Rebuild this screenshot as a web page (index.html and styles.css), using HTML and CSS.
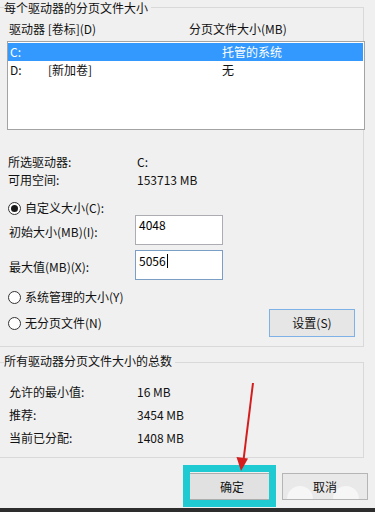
FILE: index.html
```html
<!DOCTYPE html>
<html lang="zh-CN">
<head>
<meta charset="utf-8">
<title>虚拟内存</title>
<link rel="stylesheet" href="styles.css">
</head>
<body>
<div class="screen">
  <section class="group group-pages">
    <div class="group-title">每个驱动器的分页文件大小</div>
    <div class="col-head"><span class="h-drive">驱动器 [卷标](D)</span><span class="h-size">分页文件大小(MB)</span></div>
    <div class="list">
      <div class="row selected"><span class="c1">C:</span><span class="c2"></span><span class="c3">托管的系统</span></div>
      <div class="row"><span class="c1">D:</span><span class="c2">[新加卷]</span><span class="c3">无</span></div>
    </div>
    <div class="info">
      <div class="kv"><span class="k">所选驱动器:</span><span class="v">C:</span></div>
      <div class="kv"><span class="k">可用空间:</span><span class="v">153713 MB</span></div>
    </div>
    <div class="radio r-custom"><span class="dot checked"></span><span>自定义大小(C):</span></div>
    <div class="field f-init"><span class="flabel">初始大小(MB)(I):</span><span class="input">4048</span></div>
    <div class="field f-max"><span class="flabel">最大值(MB)(X):</span><span class="input focus">5056<span class="caret"></span></span></div>
    <div class="radio r-sys"><span class="dot"></span><span>系统管理的大小(Y)</span></div>
    <div class="last-row">
      <div class="radio r-none"><span class="dot"></span><span>无分页文件(N)</span></div>
      <button class="btn btn-set">设置(S)</button>
    </div>
  </section>

  <section class="group group-total">
    <div class="group-title">所有驱动器分页文件大小的总数</div>
    <div class="totals">
      <div class="trow"><span class="k">允许的最小值:</span><span class="v">16 MB</span></div>
      <div class="trow"><span class="k">推荐:</span><span class="v">3454 MB</span></div>
      <div class="trow"><span class="k">当前已分配:</span><span class="v">1408 MB</span></div>
    </div>
  </section>

  <div class="actions">
    <button class="btn btn-ok">确定</button>
    <button class="btn btn-cancel"><span class="wm wm-l"></span><span class="wm wm-r"></span><span class="btn-text">取消</span></button>
  </div>
  <div class="taskbar"></div>

  <div class="highlight"></div>
  <svg class="arrow" width="375" height="512" viewBox="0 0 375 512">
    <line x1="253" y1="383" x2="243.5" y2="460" stroke="#d41d1d" stroke-width="2"/>
    <polygon points="236.5,457 248,458.5 241,471" fill="#d41d1d"/>
  </svg>
</div>
</body>
</html>
```
FILE: styles.css
```css
* { box-sizing: border-box; }

html, body {
  margin: 0;
  padding: 0;
  background: #f0f0f0;
}

.screen {
  position: relative;
  width: 375px;
  height: 512px;
  overflow: hidden;
  display: flex;
  flex-direction: column;
  background: #f0f0f0;
  color: #111;
  font-family: "Noto Sans CJK SC", "Microsoft YaHei", "Noto Sans", sans-serif;
  font-size: 12px;
  line-height: 14px;
}

.group {
  width: 364px;
  border: 1px solid #d9d9d9;
  border-left: none;
}

.group-pages {
  margin-top: 7px;
  padding-bottom: 9px;
}

.group-total {
  margin-top: 15px;
  padding-bottom: 8px;
}

.group-title {
  width: max-content;
  margin-left: 4px;
  padding-right: 3px;
  background: #f0f0f0;
  line-height: 14px;
}

.group-pages .group-title { margin-top: -7px; }
.group-total .group-title { margin-top: -9px; }

.col-head {
  display: flex;
  margin-top: 7px;
  line-height: 14px;
}

.h-drive {
  width: 189px;
  padding-left: 9px;
}

.list {
  margin-top: 5px;
  margin-left: 7px;
  width: 358px;
  height: 89px;
  border: 1px solid #a3a3a3;
  background: #fff;
  padding: 1px 1px 0 0;
}

.row {
  display: flex;
  align-items: center;
  height: 18px;
  padding-left: 2px;
}

.row.selected {
  background: #3399ff;
  color: #fff;
}

.c1 { width: 38px; }
.c2 { width: 174px; }

.info {
  margin-top: 23px;
}

.kv {
  display: flex;
  height: 18px;
  line-height: 18px;
}

.kv .k {
  width: 137px;
  padding-left: 8px;
}

.radio {
  display: flex;
  align-items: center;
  height: 14px;
  padding-left: 8px;
}

.dot {
  width: 13px;
  height: 13px;
  border: 1px solid #333;
  border-radius: 50%;
  background: #fff;
  margin-right: 4px;
  display: flex;
  align-items: center;
  justify-content: center;
}

.dot.checked::after {
  content: "";
  width: 7px;
  height: 7px;
  border-radius: 50%;
  background: #1a1a1a;
}

.r-custom { margin-top: 12px; }
.r-sys { margin-top: 10px; }

.field {
  display: flex;
  align-items: center;
}

.f-init { margin-top: 0; }
.f-max { margin-top: 5px; }

.flabel {
  width: 135px;
  padding-left: 9px;
  padding-top: 3px;
}

.input {
  display: flex;
  align-items: center;
  width: 88px;
  height: 30px;
  padding: 0 3px 10px;
  border: 1px solid #abadb3;
  background: #fff;
  color: #000;
}

.f-max .input {
  padding-bottom: 8px;
}

.input.focus {
  border-color: #7a9ec4;
}

.caret {
  width: 1px;
  height: 14px;
  margin-left: 1px;
  background: #000;
}

.last-row {
  display: flex;
  align-items: center;
  justify-content: space-between;
  margin-top: 5px;
  padding-right: 8px;
}

.btn {
  width: 86px;
  height: 27px;
  margin: 0;
  padding: 0;
  font-family: inherit;
  font-size: 12px;
  line-height: 14px;
  color: #111;
  background: #e1e1e1;
  border: 1px solid #adadad;
}

.btn-set {
  height: 28px;
  background: #e6e6e6;
  border-color: #7eb1e6;
}

.totals {
  margin-top: 12px;
}

.trow {
  display: flex;
  align-items: center;
  height: 23px;
}

.trow .k {
  width: 137px;
  padding-left: 9px;
}

.actions {
  display: flex;
  gap: 7px;
  margin-top: 15px;
  padding-left: 189px;
}

.btn-cancel {
  position: relative;
  overflow: hidden;
  border-color: #b5b5b5;
  background: #e9e9e9;
}

.btn-text {
  position: relative;
}

.wm {
  position: absolute;
  top: 12px;
  width: 26px;
  height: 26px;
  border-radius: 50%;
  background: #f6f6f6;
}

.wm-l { left: 4px; }
.wm-r { left: 50px; }

.taskbar {
  margin-top: auto;
  height: 4px;
  background: #2d2d2d;
}

.highlight {
  position: absolute;
  left: 183px;
  top: 465px;
  width: 93px;
  height: 42px;
  border: 7px solid #1fcad3;
}

.arrow {
  position: absolute;
  left: 0;
  top: 0;
  pointer-events: none;
}
```
